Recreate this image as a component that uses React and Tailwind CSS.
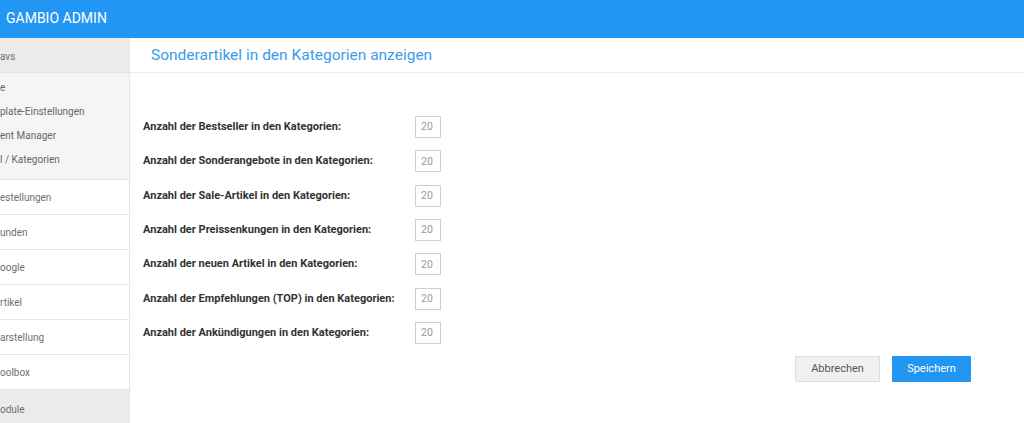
import React from "react";

const subItems = ["e", "plate-Einstellungen", "ent Manager", "l / Kategorien"];
const items = ["estellungen", "unden", "oogle", "rtikel", "arstellung", "oolbox"];
const rows = [
  "Anzahl der Bestseller in den Kategorien:",
  "Anzahl der Sonderangebote in den Kategorien:",
  "Anzahl der Sale-Artikel in den Kategorien:",
  "Anzahl der Preissenkungen in den Kategorien:",
  "Anzahl der neuen Artikel in den Kategorien:",
  "Anzahl der Empfehlungen (TOP) in den Kategorien:",
  "Anzahl der Ankündigungen in den Kategorien:",
];

export default function App() {
  return (
    <div className="w-[1024px] h-[423px] overflow-hidden bg-white flex flex-col" style={{ fontFamily: "Roboto, 'Liberation Sans', sans-serif" }}>
      <div className="h-[38px] shrink-0 bg-[#2196f3] text-white flex items-center pl-[6px] pb-[2px] text-[14px]">
        GAMBIO ADMIN
      </div>
      <div className="flex flex-1 min-h-0">
        <div className="w-[130px] shrink-0 border-r border-[#e6e6e6] flex flex-col text-[10px] text-[#6f6f6f] overflow-hidden">
          <div className="h-[35px] shrink-0 bg-[#ebebeb] border-b border-[#e2e2e2] flex items-center pt-[2px]">avs</div>
          <div className="h-[107px] shrink-0 bg-[#f5f5f5] pt-[2px] border-b border-[#e2e2e2] text-[#666]">
            {subItems.map((s) => (
              <div key={s} className="h-[24px] flex items-center">{s}</div>
            ))}
          </div>
          {items.map((s) => (
            <div key={s} className="h-[35px] shrink-0 border-b border-[#e6e6e6] flex items-center bg-white">{s}</div>
          ))}
          <div className="flex-1 bg-[#ebebeb] flex items-start pt-[12px]">odule</div>
        </div>
        <div className="flex-1 flex flex-col">
          <div className="h-[35px] shrink-0 border-b border-[#ececec] flex items-center pl-[21px] pt-[2px] text-[15.5px] text-[#3d9be9]">
            Sonderartikel in den Kategorien anzeigen
          </div>
          <div className="pt-[37px] pl-[13px]">
            {rows.map((r) => (
              <div key={r} className="h-[34.33px] flex items-center">
                <div className="w-[272px] text-[11px] font-bold text-[#333]">{r}</div>
                <div className="w-[26px] h-[22px] border border-[#cfcfcf] flex items-center pl-[5px] text-[10.5px] text-[#999]">20</div>
              </div>
            ))}
          </div>
          <div className="flex justify-end gap-[12px] pr-[53px] mt-[6px]">
            <button className="w-[85px] h-[26px] bg-[#f0f0f0] border border-[#dcdcdc] text-[11px] text-[#555] rounded-[1px]">Abbrechen</button>
            <button className="w-[79px] h-[26px] bg-[#2196f3] text-[11px] text-white rounded-[1px]">Speichern</button>
          </div>
        </div>
      </div>
    </div>
  );
}
